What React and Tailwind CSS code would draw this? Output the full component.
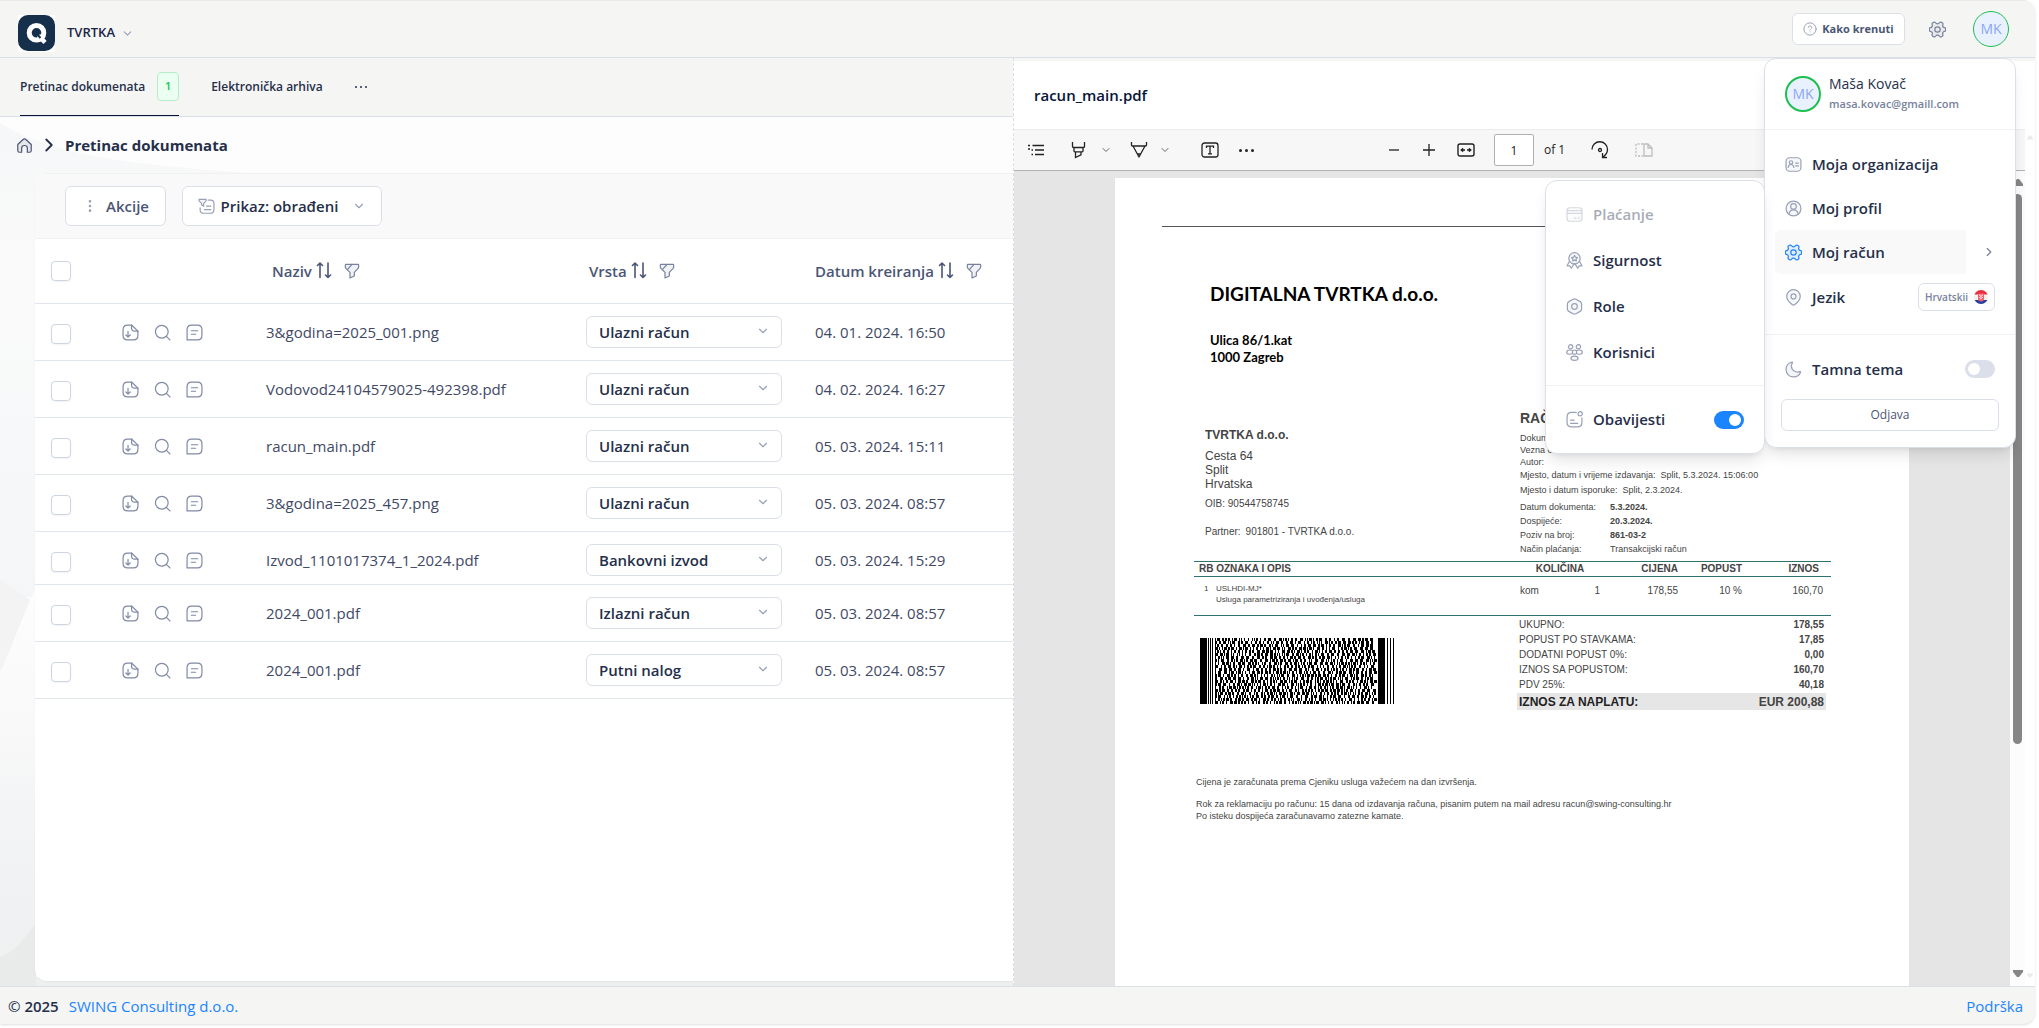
import { ChevronDown, ChevronRight, MoreVertical } from "lucide-react";
import clsx from "clsx";

const rows = [
    { name: "3&godina=2025_001.png", type: "Ulazni račun", date: "04. 01. 2024. 16:50" },
    { name: "Vodovod24104579025-492398.pdf", type: "Ulazni račun", date: "04. 02. 2024. 16:27" },
    { name: "racun_main.pdf", type: "Ulazni račun", date: "05. 03. 2024. 15:11" },
    { name: "3&godina=2025_457.png", type: "Ulazni račun", date: "05. 03. 2024. 08:57" },
    { name: "Izvod_1101017374_1_2024.pdf", type: "Bankovni izvod", date: "05. 03. 2024. 15:29", short: true },
    { name: "2024_001.pdf", type: "Izlazni račun", date: "05. 03. 2024. 08:57" },
    { name: "2024_001.pdf", type: "Putni nalog", date: "05. 03. 2024. 08:57" },
];

const types = ["Ulazni račun", "Izlazni račun", "Bankovni izvod", "Putni nalog"];

const totals = [
    ["UKUPNO:", "178,55"],
    ["POPUST PO STAVKAMA:", "17,85"],
    ["DODATNI POPUST 0%:", "0,00"],
    ["IZNOS SA POPUSTOM:", "160,70"],
    ["PDV 25%:", "40,18"],
];

/* ---------- icons ---------- */

const Icon = ({ size = 18, className, width = 1.7, children }) => (
    <svg
        width={size}
        height={size}
        viewBox="0 0 24 24"
        fill="none"
        stroke="currentColor"
        strokeWidth={width}
        strokeLinecap="round"
        strokeLinejoin="round"
        className={clsx("shrink-0", className)}
        aria-hidden="true"
    >
        {children}
    </svg>
);

const GearIcon = (props) => (
    <Icon {...props}>
        <path
            d="M6.500 1.800c1-.6 2-.3 2.700.7.700 1 1.400 1.500 2.800 1.500s2.100-.5 2.800-1.500c.7-1 1.700-1.300 2.700-.7l1.300.8c1 .6 1.200 1.600.7 2.700-.5 1-.4 1.800.2 2.700.6 1 1.300 1.300 2.300 1.400 1.100.1 1.500.9 1.500 1.900v1.400c0 1-.4 1.800-1.500 1.900-1 .1-1.700.4-2.300 1.400-.6.9-.7 1.700-.2 2.700.5 1.100.3 2.100-.7 2.700l-1.300.8c-1 .6-2 .3-2.700-.7-.7-1-1.400-1.500-2.800-1.500s-2.100.5-2.800 1.500c-.7 1-1.700 1.300-2.700.7l-1.300-.8c-1-.6-1.200-1.600-.7-2.700.5-1 .4-1.800-.2-2.700-.6-1-1.300-1.300-2.300-1.400C.9 14.500.5 13.700.5 12.700v-1.400c0-1 .4-1.800 1.500-1.900 1-.1 1.700-.4 2.300-1.400.6-.9.700-1.700.2-2.700-.5-1.100-.3-2.100.7-2.700z"
            fill="currentColor"
            fillOpacity="0.1"
        />
        <circle cx="12" cy="12" r="3.800" />
    </Icon>
);

const HomeIcon = (props) => (
    <Icon {...props}>
        <path d="M2.500 10.500 10 3.500c1.200-1.100 2.800-1.100 4 0l7.500 7v8.500c0 1.700-.8 2.500-2.500 2.500h-3v-6c0-2-1.500-3.500-4-3.500s-4 1.500-4 3.500v6H5c-1.700 0-2.500-.8-2.500-2.500z" fill="currentColor" fillOpacity="0.1" />
    </Icon>
);

const ViewFilterIcon = (props) => (
    <Icon {...props}>
        <path d="M1.500 2h10v2L8 7.500v4l-3-1.500V7.500L1.500 4z" fill="currentColor" fillOpacity="0.1" />
        <path d="M14.500 3H18c3 0 4.500 1.500 4.500 4.500v9c0 3.500-1.500 5-5 5H8c-3.500 0-5-1.500-5-5V14M12 11.500h6M9 16.500h9" />
    </Icon>
);

const SortIcon = () => (
    <svg width="16" height="18" viewBox="0 0 16 18" fill="none" stroke="#4b5675" strokeWidth="1.600" strokeLinecap="round" strokeLinejoin="round" aria-hidden="true">
        <path d="M4 15.500V1M1.500 3.500 4 1l2.500 2.500M12 1v14.500M9.500 13l2.500 2.500 2.500-2.500" />
    </svg>
);

const FunnelIcon = () => (
    <Icon size={16} width={1.800} className="text-[#78829d]">
        <path d="M3 2h18c.8 0 1 .6 1 1.200V6c0 1-.5 1.800-1.200 2.500L15.500 14v5.500L9 22.500V14L3.200 8.500C2.500 7.800 2 7 2 6V3.200C2 2.600 2.200 2 3 2z" fill="currentColor" fillOpacity="0.1" />
        <path d="M12 2 5 10" />
    </Icon>
);

const FileDownIcon = (props) => (
    <Icon {...props}>
        <path d="M13.500 1.500H8C4 1.500 1.500 4 1.500 8v8c0 4 2.500 6.500 6.500 6.500h8c4 0 6.500-2.500 6.500-6.500v-6z" />
        <path d="M13.500 1.500v4c0 3 1.500 4.500 4.500 4.500h4.500M8.500 10.500v8M5.500 15.500l3 3 3-3" />
    </Icon>
);

const SearchIcon = (props) => (
    <Icon {...props}>
        <circle cx="11" cy="11" r="9" />
        <path d="m17.500 17.500 5 5" />
    </Icon>
);

const NoteIcon = (props) => (
    <Icon {...props}>
        <path d="M8 1.500h8c4.300 0 6.500 2.200 6.500 6.500v8c0 4.300-2.200 6.500-6.500 6.500H1.500V8c0-4.300 2.200-6.500 6.500-6.500zM7.500 9.500h9M7.500 14.500h6" />
    </Icon>
);

const OrgIcon = (props) => (
    <Icon {...props}>
        <rect x="1.500" y="2.500" width="21" height="19" rx="5" fill="currentColor" fillOpacity="0.08" />
        <circle cx="8.500" cy="9" r="2.300" />
        <path d="M4.500 16c.5-2.700 2-4 4-4s3.500 1.300 4 4M15 10h4M15 14h4" />
    </Icon>
);

const ProfileIcon = (props) => (
    <Icon {...props}>
        <circle cx="12" cy="12" r="10.500" fill="currentColor" fillOpacity="0.08" />
        <circle cx="12" cy="9" r="4" />
        <path d="M5.500 19.500c1-3.800 3.500-5.500 6.500-5.500s5.500 1.700 6.500 5.500" />
    </Icon>
);

const PinIcon = (props) => (
    <Icon {...props}>
        <path d="M21.500 10.500c0 5-4.500 9-7.500 11.500-1.200 1-2.800 1-4 0-3-2.500-7.500-6.500-7.500-11.500C2.500 5.300 6.700 1 12 1s9.500 4.300 9.500 9.500z" fill="currentColor" fillOpacity="0.08" />
        <circle cx="12" cy="10.500" r="3.500" />
    </Icon>
);

const MoonIcon = (props) => (
    <Icon {...props}>
        <path d="M10 1.500C4.800 2.500 1.500 7 1.500 12c0 6 4.500 10.500 10.500 10.500 4.500 0 8.500-2.500 10-6.500.3-.9-.2-1.300-1-1-5.500 2-12-1.500-12-8 0-1.500.5-3 1.500-4.300.5-.7.2-1.300-.5-1.200z" fill="currentColor" fillOpacity="0.1" />
    </Icon>
);

const CardIcon = (props) => (
    <Icon {...props}>
        <rect x="1.500" y="2.500" width="21" height="19" rx="4" fill="currentColor" fillOpacity="0.08" />
        <path d="M1.500 6.500h21M1.500 10.500h21M12 17h2M17 17h2" />
    </Icon>
);

const AwardIcon = (props) => (
    <Icon {...props}>
        <circle cx="12" cy="9" r="8" fill="currentColor" fillOpacity="0.08" />
        <path d="m12 4.800 1.400 2.500 2.800.5-2 2.100.4 2.800-2.600-1.200-2.600 1.200.4-2.800-2-2.100 2.800-.5z" />
        <path d="m5 13-3.500 6.500 4 .2L7.500 23l4-6.500M19 13l3.500 6.500-4 .2L16.500 23l-4-6.500" />
    </Icon>
);

const RoleIcon = (props) => (
    <Icon {...props}>
        <path d="M10 1.700c1.300-.7 2.700-.7 4 0l6 3.400c1.300.7 2 1.900 2 3.400v7c0 1.500-.7 2.700-2 3.400l-6 3.400c-1.300.7-2.700.7-4 0l-6-3.400c-1.300-.7-2-1.900-2-3.400v-7C2 7 2.700 5.800 4 5.100z" fill="currentColor" fillOpacity="0.08" />
        <circle cx="12" cy="12" r="4" />
    </Icon>
);

const UsersIcon = (props) => (
    <Icon {...props}>
        <circle cx="6.500" cy="4" r="3" />
        <circle cx="17.500" cy="4" r="3" />
        <circle cx="12" cy="11.500" r="3" />
        <ellipse cx="12" cy="20" rx="5" ry="3" fill="currentColor" fillOpacity="0.08" />
        <path d="M9 13.500c-1 .7-2.200 1-3.500 1-2.700 0-4.500-1.200-4.500-3s1.800-3 4.500-3c1.300 0 2.500.3 3.500 1M15 13.500c1 .7 2.200 1 3.500 1 2.700 0 4.500-1.200 4.500-3s-1.800-3-4.500-3c-1.300 0-2.500.3-3.500 1" />
    </Icon>
);

const BellIcon = (props) => (
    <Icon {...props}>
        <path d="M14.500 2H8C4 2 1.500 4.500 1.500 8.500V16c0 4 2.500 6.500 6.500 6.500h8c4 0 6.500-2.500 6.500-6.500V9.500" />
        <circle cx="20" cy="4" r="3" />
        <path d="M6.500 13h5M6.500 17.500h10" />
    </Icon>
);

const CroatiaFlag = () => (
    <svg width="14" height="14" viewBox="0 0 14 14" aria-hidden="true">
        <clipPath id="flag">
            <circle cx="7" cy="7" r="7" />
        </clipPath>
        <g clipPath="url(#flag)">
            <path fill="#f0f0f0" d="M0 0h14v14H0z" />
            <path fill="#e8303f" d="M0 0h14v4.500H0z" />
            <path fill="#27409b" d="M0 10h14v4H0z" />
            <path fill="#f4606a" d="M4 3.500h6v5a3 3 0 0 1-6 0z" />
            <path fill="#fff" d="M5.200 4.500h1.200v1.200H5.200zM7.600 4.500h1.200v1.200H7.600zM6.400 5.700h1.200v1.200H6.400zM5.200 6.900h1.200v1.200H5.200zM7.600 6.900h1.200v1.200H7.600zM6.400 8.100h1.200v1.200H6.400z" />
        </g>
    </svg>
);

const Logo = () => (
    <svg width="37" height="37" viewBox="0 0 37 37" aria-hidden="true">
        <path fill="#fff" d="M0 0h37v37H0z" />
        <rect width="37" height="36" rx="10" fill="#16304c" />
        <circle cx="18.500" cy="17.800" r="7.300" fill="none" stroke="#fff" strokeWidth="5" />
        <path d="m20.500 20.500 6.500 7" stroke="#fff" strokeWidth="4.500" />
        <path d="m18.500 18.500 4 4.500" stroke="#16304c" strokeWidth="2" />
    </svg>
);

/* ---------- small controls ---------- */

const Avatar = ({ thick }) => (
    <span
        className={clsx(
            "flex size-9 shrink-0 items-center justify-center rounded-full border-[#1bc04f] bg-[#e9f1ff] text-sm text-[#8ba6f5]",
            thick ? "border-2" : "border"
        )}
    >
        MK
    </span>
);

const Check = ({ label }) => (
    <input
        type="checkbox"
        aria-label={label}
        className="block size-5 appearance-none rounded border border-[#cdd5e3] bg-white shadow-xs checked:bg-blue-500"
    />
);

const Toggle = ({ id, on }) => (
    <input
        id={id}
        type="checkbox"
        defaultChecked={on}
        className="relative h-[18px] w-[30px] appearance-none rounded-full bg-[#dbdfe9] before:absolute before:left-[3px] before:top-[3px] before:size-3 before:rounded-full before:bg-white checked:bg-[#1b84ff] checked:before:left-[15px]"
    />
);

const MenuItem = ({ icon: IconTag, children, className, iconClass = "text-[#99a1b7]" }) => (
    <button className={clsx("flex items-center gap-[10px] text-[15px] font-semibold text-[#252f4a]", className)}>
        <IconTag size={17} className={iconClass} />
        {children}
    </button>
);

const Separator = () => <span className="h-4 w-px bg-[#b8b8b8]" />;

/* ---------- header ---------- */

const Header = () => (
    <header className="flex h-[58px] shrink-0 items-center border-b border-[#dbdfe9] border-t border-t-[#e9e9e9] pl-[18px] pr-[26px]">
        <div className="flex items-center gap-3 pt-2">
            <Logo />
            <button className="flex items-center gap-[6px] text-[13px] font-semibold text-[#1b2547]">
                TVRTKA
                <ChevronDown size={13} className="text-[#99a1b7]" />
            </button>
        </div>
        <div className="ml-auto flex items-center">
            <button className="flex h-8 w-[113px] items-center justify-center gap-[5px] rounded-md border border-[#dbdfe9] bg-white text-[11px] font-bold text-[#4b5675]">
                <Icon size={14} className="text-[#99a1b7]">
                    <circle cx="12" cy="12" r="10.500" />
                    <path d="M9 9.500c0-1.700 1.300-2.800 3-2.800s3 1.100 3 2.700c0 2-3 2.300-3 4.300M12 17v.1" />
                </Icon>
                Kako krenuti
            </button>
            <button className="ml-6 mr-[27px]" aria-label="Postavke">
                <GearIcon size={17} className="text-[#78829d]" />
            </button>
            <Avatar />
        </div>
    </header>
);

const AccountMenu = () => (
    <div className="absolute right-[19px] top-[58px] z-20 h-[390px] w-[252px] rounded-xl border border-[#dbdfe9] bg-white shadow-lg">
        <div className="flex h-[71px] items-center gap-2 border-b border-[#f1f1f4] px-5">
            <Avatar thick />
            <div>
                <div className="text-sm leading-5 font-medium text-[#252f4a]">Maša Kovač</div>
                <div className="text-[11px] leading-5 font-semibold text-[#78829d]">masa.kovac@gmaill.com</div>
            </div>
        </div>
        <div className="h-[205px] border-b border-[#f1f1f4] px-[10px] pt-3">
            <MenuItem icon={OrgIcon} className="h-11 px-[10px]">Moja organizacija</MenuItem>
            <MenuItem icon={ProfileIcon} className="h-11 px-[10px]">Moj profil</MenuItem>
            <div className="flex items-center">
                <MenuItem icon={GearIcon} iconClass="text-[#1b84ff]" className="h-11 w-[191px] rounded-l-md bg-[#f9f9f9] px-[10px]">
                    Moj račun
                </MenuItem>
                <ChevronRight size={14} className="ml-4 text-[#78829d]" />
            </div>
            <div className="flex items-center justify-between pr-[10px]">
                <MenuItem icon={PinIcon} className="h-[46px] px-[10px]">Jezik</MenuItem>
                <button className="flex h-7 w-[77px] items-center justify-center gap-[6px] rounded-md border border-[#dbdfe9] text-[10px] font-semibold text-[#78829d]">
                    Hrvatskii
                    <CroatiaFlag />
                </button>
            </div>
        </div>
        <div className="px-4 pt-3">
            <div className="flex h-11 items-center gap-[10px] px-1">
                <MoonIcon size={17} className="text-[#99a1b7]" />
                <label htmlFor="dark" className="flex-1 text-[15px] font-semibold text-[#252f4a]">Tamna tema</label>
                <Toggle id="dark" />
            </div>
            <button className="mt-2 h-8 w-full rounded-md border border-[#dbdfe9] text-xs font-medium text-[#4b5675]">Odjava</button>
        </div>

        <div className="absolute right-full top-[121px] w-[220px] rounded-xl border border-[#dbdfe9] bg-white shadow-lg">
            <div className="border-b border-[#f1f1f4] px-5 py-[10px]">
                <MenuItem icon={CardIcon} className="h-[46px] opacity-40">Plaćanje</MenuItem>
                <MenuItem icon={AwardIcon} className="h-[46px]">Sigurnost</MenuItem>
                <MenuItem icon={RoleIcon} className="h-[46px]">Role</MenuItem>
                <MenuItem icon={UsersIcon} className="h-[46px]">Korisnici</MenuItem>
            </div>
            <div className="flex h-[67px] items-center gap-[10px] px-5">
                <BellIcon size={17} className="text-[#99a1b7]" />
                <label htmlFor="notify" className="flex-1 text-[15px] font-semibold text-[#252f4a]">Obavijesti</label>
                <Toggle id="notify" on />
            </div>
        </div>
    </div>
);

/* ---------- document list ---------- */

const Tabs = () => (
    <nav className="flex h-[59px] shrink-0 items-stretch border-b border-[#dbdfe9] bg-[#f5f5f3] pl-5 text-xs font-semibold text-[#252f4a]">
        <a href="#inbox" className="flex items-center gap-3 border-b border-[#071437]">
            Pretinac dokumenata
            <span className="flex h-[29px] w-[22px] items-center justify-center rounded border border-[#b5eec6] bg-[#eafff1] text-[11px] text-[#17c653]">1</span>
        </a>
        <a href="#archive" className="ml-8 flex items-center">Elektronička arhiva</a>
        <button className="ml-8 flex items-center gap-[3px]" aria-label="Više">
            <span className="size-[2px] rounded-full bg-[#252f4a]" />
            <span className="size-[2px] rounded-full bg-[#252f4a]" />
            <span className="size-[2px] rounded-full bg-[#252f4a]" />
        </button>
    </nav>
);

const HeadCell = ({ children, className }) => (
    <th className={clsx("h-[65px] border-b border-[#e1e5ee] p-0 font-semibold", className)}>
        <div className="flex items-center">
            {children}
            <button className="ml-1" aria-label={"Sortiraj " + children}><SortIcon /></button>
            <button className="ml-3" aria-label={"Filtriraj " + children}><FunnelIcon /></button>
        </div>
    </th>
);

const Row = ({ row, index }) => {
    const cell = clsx("border-b border-[#e1e5ee] p-0 pt-3 align-top", row.short ? "h-[53px]" : "h-[57px]");
    return (
        <tr>
            <td className={cell}>
                <div className="flex h-9 items-center pl-4"><Check label={row.name} /></div>
            </td>
            <td className={cell}>
                <div className="flex h-8 items-center gap-[15px] text-[#8089a5]">
                    <button aria-label="Preuzmi"><FileDownIcon size={17} /></button>
                    <button aria-label="Pregled"><SearchIcon size={17} /></button>
                    <button aria-label="Bilješka"><NoteIcon size={17} /></button>
                </div>
            </td>
            <td className={cell}><div className="flex h-8 items-center text-[#3f4966]">{row.name}</div></td>
            <td className={cell}>
                <div className="relative h-8 w-[196px]">
                    <select
                        defaultValue={row.type}
                        aria-label={"Vrsta " + (index + 1)}
                        className="h-full w-full appearance-none rounded-md border border-[#dbdfe9] bg-white pl-3 font-semibold text-[#252f4a]"
                    >
                        {types.map((t) => <option key={t}>{t}</option>)}
                    </select>
                    <ChevronDown size={14} className="pointer-events-none absolute right-3 top-2 text-[#99a1b7]" />
                </div>
            </td>
            <td className={cell}><div className="flex h-8 items-center whitespace-nowrap text-[#3f4966]">{row.date}</div></td>
        </tr>
    );
};

const Documents = () => (
    <section className="relative flex min-h-0 min-w-0 flex-col">
        <Tabs />
        <div className="relative flex min-h-0 flex-1 flex-col bg-[#fdfdfd] pb-[5px] pl-[35px]">
            {/* soft background waves */}
            <svg className="absolute inset-0 h-full w-full" viewBox="0 0 1013 869" preserveAspectRatio="none" aria-hidden="true">
                <defs>
                    <linearGradient id="upper" x1="0" y1="0" x2="0" y2="1">
                        <stop offset="0" stopColor="#f6f7f8" />
                        <stop offset="0.350" stopColor="#fafafa" />
                        <stop offset="1" stopColor="#f4f6f8" />
                    </linearGradient>
                    <linearGradient id="lower" x1="0" y1="0" x2="0" y2="1">
                        <stop offset="0" stopColor="#fdfdfd" />
                        <stop offset="0.400" stopColor="#f8f8f8" />
                        <stop offset="0.550" stopColor="#f3f4f6" />
                        <stop offset="1" stopColor="#eeefef" />
                    </linearGradient>
                </defs>
                <path d="M0 6C50 36 110 46 250 56V480H0z" fill="url(#upper)" />
                <path d="M0 462 40 490V620H0z" fill="#f3f3f3" />
                <path d="M36 470C20 505 8 540 0 555V869H1013V860H36z" fill="url(#lower)" />
                <path d="M0 840C14 836 26 820 36 806V869H0z" fill="#e9eaea" />
            </svg>
            <div className="relative -ml-[19px] flex h-14 shrink-0 items-center gap-[5px]">
                <HomeIcon size={17} className="text-[#4b5675]" />
                <ChevronRight size={22} className="text-[#252f4a]" />
                <h1 className="text-[15px] font-bold text-[#252f4a]">Pretinac dokumenata</h1>
            </div>
            <div className="relative flex-1 overflow-hidden rounded-l-xl bg-white shadow-xs">
                <div className="flex h-[66px] items-center gap-4 border-y border-[#f1f1f4] bg-[#f9f9f9] pl-[30px]">
                    <button className="flex h-10 w-[101px] items-center justify-center gap-2 rounded-md border border-[#dbdfe9] bg-white text-[15px] font-semibold text-[#4b5675]">
                        <MoreVertical size={16} className="text-[#99a1b7]" />
                        Akcije
                    </button>
                    <button className="flex h-10 w-[200px] items-center justify-center gap-[6px] rounded-md border border-[#dbdfe9] bg-white text-[15px] font-semibold text-[#252f4a]">
                        <ViewFilterIcon size={17} className="text-[#99a1b7]" />
                        Prikaz: obrađeni
                        <ChevronDown size={14} className="ml-2 text-[#99a1b7]" />
                    </button>
                </div>
                <table className="w-full table-fixed border-separate border-spacing-0 text-left text-[15px] text-[#4b5675]">
                    <colgroup>
                        <col className="w-[87px]" />
                        <col className="w-36" />
                        <col className="w-[320px]" />
                        <col className="w-[229px]" />
                        <col />
                    </colgroup>
                    <thead>
                        <tr>
                            <th className="border-b border-[#e1e5ee] p-0 pl-4"><Check label="Označi sve" /></th>
                            <th className="border-b border-[#e1e5ee] p-0" />
                            <HeadCell className="pl-[6px]">Naziv</HeadCell>
                            <HeadCell className="pl-[3px]">Vrsta</HeadCell>
                            <HeadCell>Datum kreiranja</HeadCell>
                        </tr>
                    </thead>
                    <tbody>
                        {rows.map((row, i) => <Row key={i} row={row} index={i} />)}
                    </tbody>
                </table>
            </div>
        </div>
    </section>
);

/* ---------- pdf viewer ---------- */

const PdfToolbar = () => (
    <div className="flex h-[42px] min-w-0 flex-1 items-center border-b border-[#b3b3b3] border-t border-t-[#ececec] bg-[#f7f7f7] pl-[13px] text-[#222]">
        <button aria-label="Sadržaj">
            <svg width="18" height="18" viewBox="0 0 18 18" stroke="currentColor" strokeWidth="1.500" fill="none" aria-hidden="true">
                <path d="M5.500 4.500H17M8 9h9M8 13.500h9M1 4.500h2M1 8h2M4.500 9h1.500M4.500 13.500H6" />
            </svg>
        </button>
        <span className="ml-[13px] mr-3"><Separator /></span>
        <button className="flex items-center gap-3" aria-label="Isticanje">
            <svg width="18" height="18" viewBox="0 0 18 18" stroke="currentColor" strokeWidth="1.300" fill="none" aria-hidden="true">
                <path d="M2.500 1v4.500c0 .6.400 1 1 1h10c.6 0 1-.4 1-1V1M4 6.500v3.500c0 .5.300.8.800.8h7.400c.5 0 .8-.3.800-.8V6.500M5.500 11v5.500l5.500-2.700V11" />
            </svg>
            <ChevronDown size={12} className="text-[#666]" />
        </button>
        <button className="ml-[18px] flex items-center gap-[11px]" aria-label="Crtanje">
            <svg width="18" height="18" viewBox="0 0 18 18" stroke="currentColor" strokeWidth="1.300" fill="none" strokeLinejoin="round" aria-hidden="true">
                <path d="M1.500 1v3c0 .6.400 1 1 1h13c.6 0 1-.4 1-1V1M3 5l6 11 6-11M7.500 13h3" />
            </svg>
            <ChevronDown size={12} className="text-[#666]" />
        </button>
        <span className="ml-[15px] mr-[15px]"><Separator /></span>
        <button aria-label="Tekst">
            <svg width="18" height="18" viewBox="0 0 18 18" stroke="currentColor" strokeWidth="1.300" fill="none" aria-hidden="true">
                <rect x="1" y="2" width="16" height="14" rx="2.500" />
                <path d="M5.500 7V5.200h7V7M9 5.200v7.600M7 12.800h4" />
            </svg>
        </button>
        <button className="ml-5 flex items-center gap-[3px]" aria-label="Više">
            <span className="size-[3px] rounded-full bg-[#222]" />
            <span className="size-[3px] rounded-full bg-[#222]" />
            <span className="size-[3px] rounded-full bg-[#222]" />
        </button>
        <div className="ml-[133px] flex items-center">
            <button aria-label="Smanji">
                <svg width="14" height="14" viewBox="0 0 14 14" stroke="currentColor" strokeWidth="1.300" aria-hidden="true"><path d="M2 7h10" /></svg>
            </button>
            <button className="ml-[21px]" aria-label="Povećaj">
                <svg width="14" height="14" viewBox="0 0 14 14" stroke="currentColor" strokeWidth="1.300" aria-hidden="true"><path d="M1 7h12M7 1v12" /></svg>
            </button>
            <button className="ml-[21px]" aria-label="Prilagodi širini">
                <svg width="18" height="16" viewBox="0 0 18 16" stroke="currentColor" strokeWidth="1.400" fill="none" aria-hidden="true">
                    <rect x="1" y="2" width="16" height="12" rx="2" />
                    <path d="M8 8H4M10 8h4" />
                    <path d="M6 6 3.500 8 6 10zM12 6l2.500 2L12 10z" fill="currentColor" strokeWidth="0.500" />
                </svg>
            </button>
            <span className="ml-3 mr-[7px]"><Separator /></span>
            <input aria-label="Stranica" defaultValue="1" className="h-8 w-10 rounded-xs border border-[#b0b0b0] bg-white text-center text-xs" />
            <span className="ml-[10px] text-xs">of 1</span>
            <span className="ml-3 mr-[14px]"><Separator /></span>
            <button aria-label="Rotiraj">
                <svg width="18" height="18" viewBox="0 0 18 18" stroke="currentColor" strokeWidth="1.300" fill="none" aria-hidden="true">
                    <path d="M1 8.500A7.500 7.500 0 0 1 16.500 8.500c0 3-1.500 5.300-4.500 7.500M11.500 12v4.500H16" />
                    <circle cx="9" cy="9" r="1.500" />
                </svg>
            </button>
            <span className="ml-3 mr-[14px]"><Separator /></span>
            <button className="text-[#bdbdbd]" aria-label="Prikaz stranica">
                <svg width="18" height="16" viewBox="0 0 18 16" stroke="currentColor" strokeWidth="1.300" fill="none" aria-hidden="true">
                    <path d="M8 2H1v12h7" strokeDasharray="2 1.500" />
                    <path d="M9 2h4l4 4v8H9zM13 2v4h4" />
                </svg>
            </button>
        </div>
    </div>
);

// 2D payment barcode: guard bars at both ends, pseudo random modules between
const barcodePath = (() => {
    let seed = 7;
    const next = () => {
        seed = (seed + 0x6d2b79f5) | 0;
        let t = Math.imul(seed ^ (seed >>> 15), 1 | seed);
        t = (t + Math.imul(t ^ (t >>> 7), 61 | t)) ^ t;
        return ((t ^ (t >>> 14)) >>> 0) / 4294967296;
    };
    let d = "M0 0h7v66H0zM8 0h1v66H8zM10 0h1v66h-1zM12 0h1v66h-1zM178 0h7v66h-7zM187 0h1v66h-1zM190 0h1v66h-1zM193 0h1v66h-1z";
    for (let y = 0; y < 66; y += 3) {
        let x = 15;
        while (x < 175) {
            const w = 1 + Math.floor(next() * 3);
            d += `M${x} ${y}h${w}v3h-${w}z`;
            x += w + 1 + Math.floor(next() * 2.4);
        }
    }
    return d;
})();

const Invoice = () => (
    <article className="mx-auto min-h-full w-[794px] shrink-0 bg-white pt-12 font-['Liberation_Sans',sans-serif] text-[10px] text-[#444]">
        <hr className="mx-[47px] border-t border-[#555]" />
        <div className="ml-[95px] mt-[55px] font-['Lato',sans-serif] font-bold text-black">
            <h2 className="text-[19px] leading-6">DIGITALNA TVRTKA d.o.o.</h2>
            <p className="mt-[26px] text-[13px] leading-[17px]">Ulica 86/1.kat<br />1000 Zagreb</p>
        </div>
        <div className="mt-11 flex">
            <div className="ml-[90px] w-[315px] pt-[15px]">
                <p className="text-xs leading-5 font-bold">TVRTKA d.o.o.</p>
                <p className="mt-1 text-xs leading-[14px]">Cesta 64<br />Split<br />Hrvatska</p>
                <p className="mt-[6px] leading-[14px]">OIB: 90544758745</p>
                <p className="mt-[14px] flex gap-[5px] leading-[14px]">
                    <span>Partner:</span>
                    <span>901801 - TVRTKA d.o.o.</span>
                </p>
            </div>
            <div>
                <h3 className="text-sm leading-4 font-bold">RAČUN</h3>
                <p className="mt-[6px] text-[9px] leading-3">Dokument:<br />Vezna oznaka:<br />Autor:</p>
                <p className="text-[9px] leading-[15px]">
                    Mjesto, datum i vrijeme izdavanja: &nbsp;Split, 5.3.2024. 15:06:00<br />
                    Mjesto i datum isporuke: &nbsp;Split, 2.3.2024.
                </p>
                <dl className="mt-[2px] grid grid-cols-[90px_1fr] text-[9px] leading-[14px]">
                    <dt>Datum dokumenta:</dt><dd className="font-bold">5.3.2024.</dd>
                    <dt>Dospijeće:</dt><dd className="font-bold">20.3.2024.</dd>
                    <dt>Poziv na broj:</dt><dd className="font-bold">861-03-2</dd>
                    <dt>Način plaćanja:</dt><dd>Transakcijski račun</dd>
                </dl>
            </div>
        </div>
        <table className="ml-[79px] mt-[5px] w-[637px] table-fixed border-separate border-spacing-0 text-right">
            <colgroup>
                <col className="w-[22px]" />
                <col className="w-[304px]" />
                <col className="w-10" />
                <col className="w-10" />
                <col className="w-[78px]" />
                <col className="w-16" />
                <col />
            </colgroup>
            <thead>
                <tr className="leading-[14px] [&>th]:border-y [&>th]:border-[#2f7272] [&>th]:p-0">
                    <th colSpan={2} className="text-left"><span className="ml-[5px]">RB OZNAKA I OPIS</span></th>
                    <th colSpan={2} className="text-center">KOLIČINA</th>
                    <th>CIJENA</th>
                    <th>POPUST</th>
                    <th><span className="mr-3">IZNOS</span></th>
                </tr>
            </thead>
            <tbody>
                <tr className="align-top [&>td]:h-[39px] [&>td]:border-b [&>td]:border-[#2f7272] [&>td]:p-0 [&>td]:pt-[6px]">
                    <td className="text-left text-[8px] leading-[11px]"><span className="ml-[10px]">1</span></td>
                    <td className="text-left text-[8px] leading-[11px]">USLHDI-MJ*<br />Usluga parametriziranja i uvođenja/usluga</td>
                    <td className="text-left">kom</td>
                    <td>1</td>
                    <td>178,55</td>
                    <td>10 %</td>
                    <td><span className="mr-2">160,70</span></td>
                </tr>
            </tbody>
        </table>
        <div className="flex">
            <svg width="194" height="66" viewBox="0 0 194 66" className="ml-[85px] mt-[22px]" shapeRendering="crispEdges" role="img" aria-label="Barkod">
                <path d={barcodePath} fill="#000" />
            </svg>
            <div className="ml-[123px] w-[309px] pt-[1px]">
                {totals.map(([label, value]) => (
                    <div key={label} className="flex justify-between px-[2px] leading-[15px]">
                        <span>{label}</span>
                        <b>{value}</b>
                    </div>
                ))}
                <div className="mt-[1px] flex h-[17px] items-center justify-between bg-[#e6e6e6] px-[2px] text-xs">
                    <b className="text-[#222]">IZNOS ZA NAPLATU:</b>
                    <span className="font-bold">EUR 200,88</span>
                </div>
            </div>
        </div>
        <div className="ml-[81px] mt-[66px] text-[9px] leading-3">
            <p>Cijena je zaračunata prema Cjeniku usluga važećem na dan izvršenja.</p>
            <p className="mt-[10px]">Rok za reklamaciju po računu: 15 dana od izdavanja računa, pisanim putem na mail adresu racun@swing-consulting.hr</p>
            <p>Po isteku dospijeća zaračunavamo zatezne kamate.</p>
        </div>
    </article>
);

const Arrow = ({ up, small }) => (
    <svg width={small ? 6 : 10} height={small ? 5 : 7} viewBox="0 0 10 7" className={small ? "text-[#e9e9ee]" : "text-[#868686]"} aria-hidden="true">
        <path d={up ? "M4 0h2l4 5v2H0V5z" : "M0 0h10v2L6 7H4L0 2z"} fill="currentColor" />
    </svg>
);

const Viewer = () => (
    <section className="flex min-h-0 min-w-0 flex-col border-l border-dashed border-[#dbdfe9] bg-white">
        <div className="h-[3px] shrink-0 bg-[#f5f5f3]" />
        <div className="flex h-[68px] shrink-0 items-center pl-5">
            <h2 className="text-[15px] font-semibold text-[#071437]">racun_main.pdf</h2>
        </div>
        <div className="flex shrink-0">
            <PdfToolbar />
            <div className="flex w-[10px] justify-center pt-[6px]">
                <Arrow up small />
            </div>
        </div>
        <div className="flex min-h-0 flex-1">
            <div className="min-w-0 flex-1 overflow-hidden bg-[#e5e5e5] pt-[7px]">
                <Invoice />
            </div>
            <div className="flex w-[15px] flex-col items-center bg-[#fcfcfc] pb-[9px] pt-2">
                <Arrow up />
                <div className="w-full flex-1 pb-3 pt-2">
                    <div className="mx-auto h-[72%] w-[9px] rounded-full bg-[#868686]" />
                </div>
                <Arrow />
            </div>
            <div className="flex w-[10px] items-end justify-center pb-2">
                <Arrow small />
            </div>
        </div>
    </section>
);

const App = () => (
    <div className="flex h-screen flex-col bg-white pb-1 pr-1 font-['Open_Sans','Noto_Sans',sans-serif]">
        <div className="relative flex min-h-0 flex-1 flex-col overflow-hidden rounded-r-xl bg-[#f5f5f3] shadow-sm">
            <Header />
            <AccountMenu />
            <main className="grid min-h-0 flex-1 grid-cols-[1013fr_1022fr] grid-rows-[minmax(0,1fr)]">
                <Documents />
                <Viewer />
            </main>
            <footer className="flex h-[38px] shrink-0 items-center border-t border-[#dbdfe9] pl-2 pr-3 pt-[2px] text-[15px] text-[#252f4a]">
                <span>© <span className="font-semibold">2025</span></span>
                <a href="#swing" className="ml-[10px] text-[#1b84ff]">SWING Consulting d.o.o.</a>
                <a href="#podrska" className="ml-auto text-[#1b84ff]">Podrška</a>
            </footer>
        </div>
    </div>
);

export default App;
